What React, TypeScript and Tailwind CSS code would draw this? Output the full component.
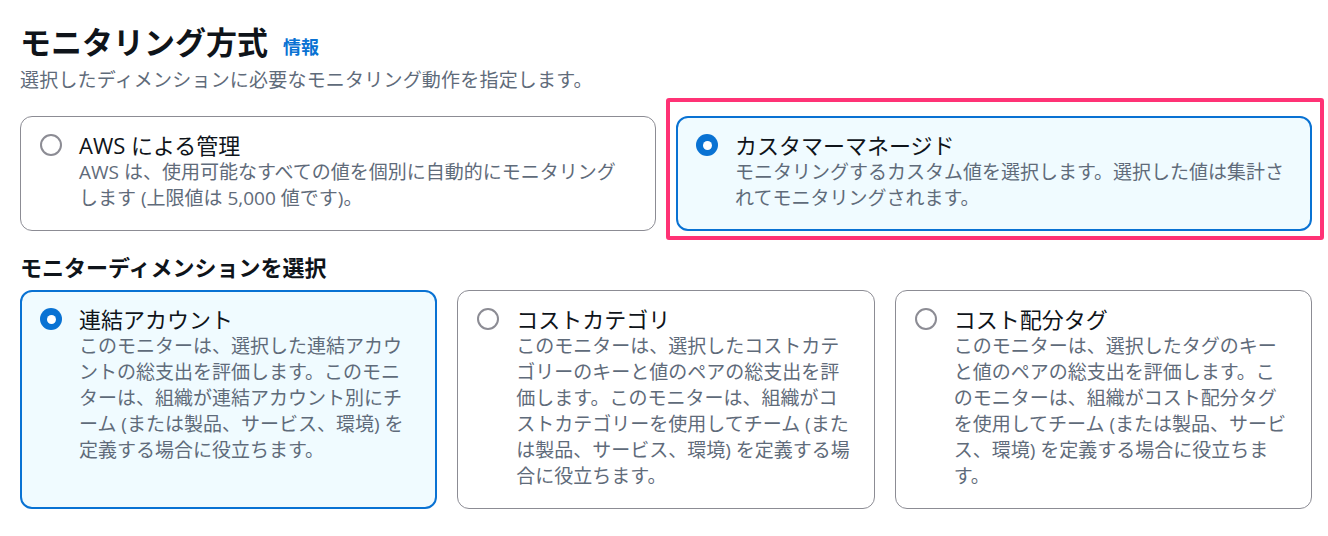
import React from "react";

type Opt = { title: string; desc: string; selected?: boolean; highlight?: boolean; descClass?: string };

function Radio({ selected }: { selected?: boolean }) {
  return (
    <div className="h-[28px] flex items-center shrink-0">
      {selected ? (
        <div className="w-[22px] h-[22px] rounded-full bg-[#0972d3] flex items-center justify-center">
          <div className="w-[9px] h-[9px] rounded-full bg-white" />
        </div>
      ) : (
        <div className="w-[22px] h-[22px] rounded-full border-2 border-[#8c8c94] bg-white" />
      )}
    </div>
  );
}

function Card({ title, desc, selected, highlight, descClass }: Opt) {
  return (
    <div className="relative">
      {highlight && (
        <div className="absolute -left-[10px] -right-[12px] -top-[18px] -bottom-[9px] border-[4px] border-[#ff3275] rounded-[3px] pointer-events-none" />
      )}
      <div
        className={
          selected
            ? "h-full rounded-[12px] border-2 border-[#0972d3] bg-[#f0fbff] pl-[18px] pr-[19px] pt-[13px] pb-[18px] flex gap-[17px]"
            : "h-full rounded-[12px] border border-[#8c8c94] bg-white pl-[19px] pr-[20px] pt-[14px] pb-[19px] flex gap-[17px]"
        }
      >
        <Radio selected={selected} />
        <div className="min-w-0">
          <div className="text-[22px] leading-[28px] text-[#0f141a]">{title}</div>
          <div className={"text-[19px] leading-[26px] text-[#5f6b7a] " + (descClass ?? "")}>{desc}</div>
        </div>
      </div>
    </div>
  );
}

export default function App() {
  return (
    <div className="w-[1328px] h-[536px] bg-white pl-[20px] pr-[16px] pt-[22px] font-['Open_Sans','Noto_Sans_CJK_JP',sans-serif]">
      <div className="flex items-baseline gap-[15px]">
        <h1 className="text-[31px] leading-[40px] font-bold text-[#0f141a]">モニタリング方式</h1>
        <span className="text-[18px] font-bold text-[#0972d3]">情報</span>
      </div>
      <p className="mt-[5px] text-[19px] leading-[26px] text-[#5f6b7a] tracking-[0.2px]">
        選択したディメンションに必要なモニタリング動作を指定します。
      </p>
      <div className="mt-[23px] grid grid-cols-2 gap-[20px]">
        <Card
          title="AWS による管理"
          desc="AWS は、使用可能なすべての値を個別に自動的にモニタリングします (上限値は 5,000 値です)。"
          descClass="pr-[12px]"
        />
        <Card
          title="カスタマーマネージド"
          desc="モニタリングするカスタム値を選択します。選択した値は集計されてモニタリングされます。"
          selected
          highlight
        />
      </div>
      <h2 className="mt-[22px] text-[22px] leading-[28px] font-bold text-[#0f141a]">
        モニターディメンションを選択
      </h2>
      <div className="mt-[9px] grid grid-cols-3 gap-[20px]">
        <Card
          title="連結アカウント"
          desc="このモニターは、選択した連結アカウントの総支出を評価します。このモニターは、組織が連結アカウント別にチーム (または製品、サービス、環境) を定義する場合に役立ちます。"
          selected
        />
        <Card
          title="コストカテゴリ"
          desc="このモニターは、選択したコストカテゴリーのキーと値のペアの総支出を評価します。このモニターは、組織がコストカテゴリーを使用してチーム (または製品、サービス、環境) を定義する場合に役立ちます。"
        />
        <Card
          title="コスト配分タグ"
          desc="このモニターは、選択したタグのキーと値のペアの総支出を評価します。このモニターは、組織がコスト配分タグを使用してチーム (または製品、サービス、環境) を定義する場合に役立ちます。"
        />
      </div>
    </div>
  );
}
